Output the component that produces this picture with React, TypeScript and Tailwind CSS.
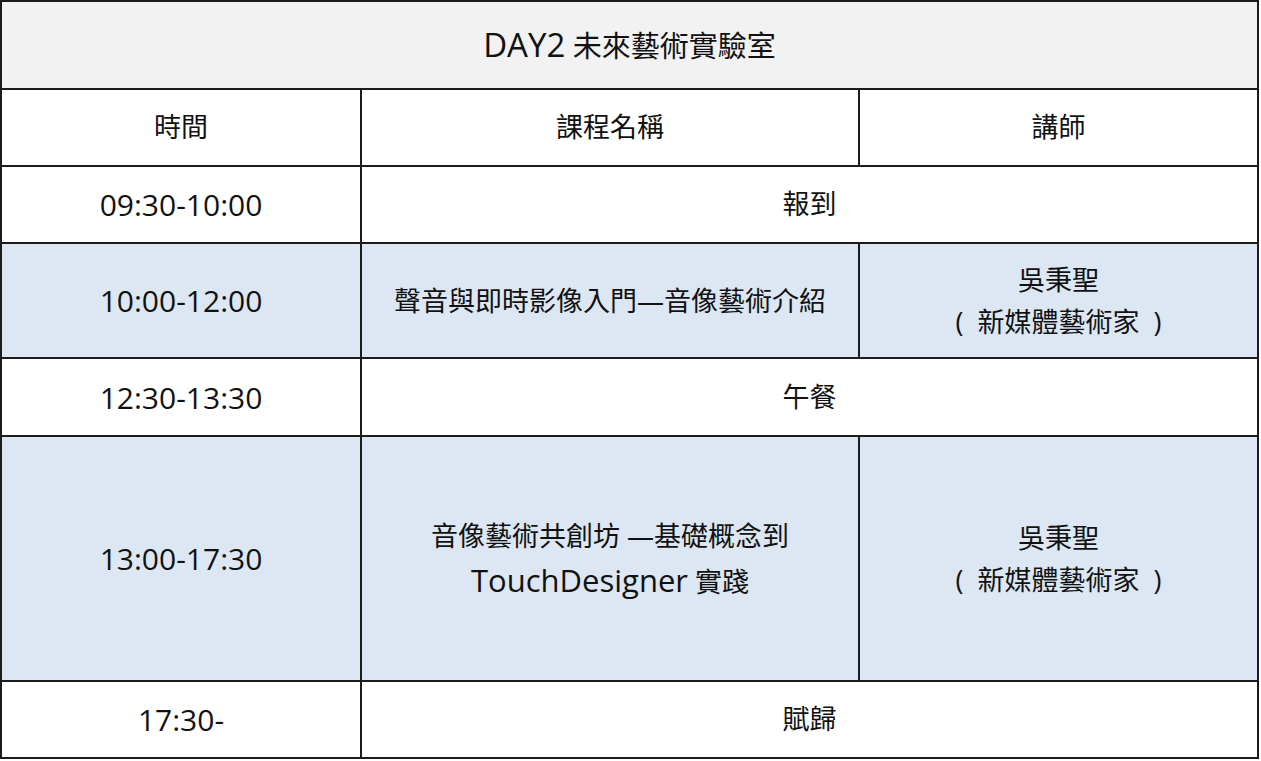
const font = {
  fontFamily: '"Open Sans", "Noto Sans CJK TC", sans-serif',
};

type Row = {
  time: string;
  course: React.ReactNode;
  teacher?: React.ReactNode;
  h: string;
  blue?: boolean;
};

const teacher = (
  <>
    <div>吳秉聖</div>
    <div className="whitespace-pre">{"(  新媒體藝術家  )"}</div>
  </>
);

const rows: Row[] = [
  { time: "09:30-10:00", course: "報到", h: "h-[77px]" },
  {
    time: "10:00-12:00",
    course: "聲音與即時影像入門—音像藝術介紹",
    teacher,
    h: "h-[115px]",
    blue: true,
  },
  { time: "12:30-13:30", course: "午餐", h: "h-[78px]" },
  {
    time: "13:00-17:30",
    course: (
      <>
        <div>音像藝術共創坊 —基礎概念到</div>
        <div>
          <span className="text-[31px]">TouchDesigner</span> 實踐
        </div>
      </>
    ),
    teacher,
    h: "h-[245px]",
    blue: true,
  },
  { time: "17:30-", course: "賦歸", h: "h-[77px]" },
];

export default function App() {
  return (
    <div className="w-[1261px] h-[761px] bg-white" style={font}>
      <table className="w-[1259px] border-collapse border-2 border-[#1c1c1c] text-[27px] text-[#111] table-fixed">
        <colgroup>
          <col className="w-[360px]" />
          <col className="w-[498px]" />
          <col />
        </colgroup>
        <tbody>
          <tr className="h-[88px] bg-[#f2f2f2]">
            <td colSpan={3} className="border-2 border-[#1c1c1c] text-center text-[29px]">
              <span className="text-[33px]">DAY2</span> 未來藝術實驗室
            </td>
          </tr>
          <tr className="h-[77px]">
            <td className="border-2 border-[#1c1c1c] text-center">時間</td>
            <td className="border-2 border-[#1c1c1c] text-center">課程名稱</td>
            <td className="border-2 border-[#1c1c1c] text-center">講師</td>
          </tr>
          {rows.map((r, i) => (
            <tr key={i} className={`${r.h} ${r.blue ? "bg-[#dce7f3]" : ""}`}>
              <td className="border-2 border-[#1c1c1c] text-center text-[30px]">
                {r.time}
              </td>
              {r.teacher ? (
                <>
                  <td className="border-2 border-[#1c1c1c] text-center leading-[45px]">
                    {r.course}
                  </td>
                  <td className="border-2 border-[#1c1c1c] text-center leading-[42px]">
                    {r.teacher}
                  </td>
                </>
              ) : (
                <td colSpan={2} className="border-2 border-[#1c1c1c] text-center">
                  {r.course}
                </td>
              )}
            </tr>
          ))}
        </tbody>
      </table>
    </div>
  );
}
